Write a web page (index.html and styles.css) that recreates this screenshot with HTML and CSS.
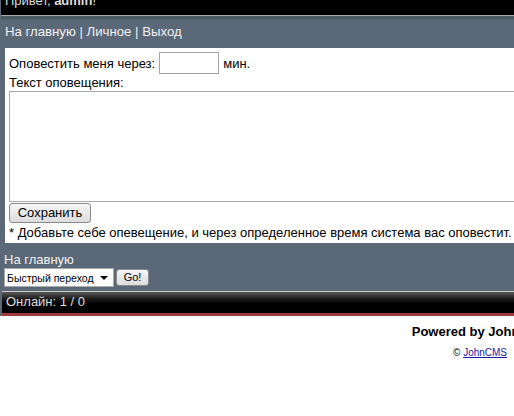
FILE: index.html
```html
<!DOCTYPE html>
<html>
<head>
<meta charset="utf-8">
<link rel="stylesheet" href="styles.css">
</head>
<body>
<div class="page">
  <div class="hello"><span class="hello-text">Привет, <b>admin</b>!</span></div>
  <div class="nav">На главную | Личное | Выход</div>
  <div class="content">
    <div class="row">Оповестить меня через: <span class="field"></span> мин.</div>
    <div class="label">Текст оповещения:</div>
    <div class="textarea"></div>
    <div class="btn-row"><span class="btn save">Сохранить</span></div>
    <div class="note">* Добавьте себе опевещение, и через определенное время система вас оповестит.</div>
  </div>
  <div class="foot-nav">
    <div class="home">На главную</div>
    <div class="jump">
      <span class="select">Быстрый переход<span class="arrow"></span></span>
      <span class="btn go">Go!</span>
    </div>
  </div>
  <div class="online">Онлайн: 1 / 0</div>
</div>
<div class="powered">
  <div class="pw">Powered by JohnCMS</div>
  <div class="copy">© <a href="#">JohnCMS</a></div>
</div>
</body>
</html>
```
FILE: styles.css
```css
html, body {
  margin: 0;
  padding: 0;
  overflow: hidden;
  background: #fff;
}
body {
  width: 960px;
  font-family: "Liberation Sans", Arial, sans-serif;
  font-size: 13px;
  color: #000;
}
.page {
  background: #5a6878;
  padding-left: 1px;
}
.hello {
  background: #000;
  height: 15px;
  overflow: hidden;
  color: #ddd;
  border-bottom: 1px solid #a8a8a8;
}
.hello-text {
  display: block;
  margin-top: -7px;
  padding-left: 4px;
  line-height: 16px;
}
.nav {
  height: 32px;
  line-height: 32px;
  padding-left: 4px;
  color: #f2f2f2;
  font-size: 13.2px;
  background: linear-gradient(#4d5a66 0, #4d5a66 3px, #5a6878 4px);
}
.content {
  margin-left: 4px;
  background: #fff;
  padding: 4px 0 4px 4px;
  height: 187px;
}
.row {
  display: flex;
  align-items: center;
  height: 22px;
}
.field {
  display: inline-block;
  border: 1px solid #a5a5a5;
  margin: 0 4px 0 4px;
  box-sizing: border-box;
  width: 60px;
  height: 22px;
}
.label {
  margin-top: 1px;
  line-height: 15px;
}
.textarea {
  margin-top: 1px;
  height: 109px;
  border: 1px solid #aaa;
  border-right: none;
}
.btn-row {
  margin-top: 1px;
  height: 20px;
}
.btn {
  display: inline-block;
  box-sizing: border-box;
  border: 1px solid #8a8a8a;
  border-radius: 3px;
  background: linear-gradient(#f6f6f6, #dcdcdc);
  text-align: center;
}
.save {
  width: 82px;
  height: 20px;
  line-height: 18px;
  font-size: 13px;
}
.note {
  margin-top: 1px;
  line-height: 17px;
}
.foot-nav {
  padding: 8px 0 4px 3px;
  color: #f2f2f2;
}
.home {
  line-height: 17px;
  font-size: 13px;
}
.jump {
  display: flex;
  align-items: center;
  gap: 2px;
  margin-top: 0;
}
.select {
  display: inline-flex;
  align-items: center;
  box-sizing: border-box;
  width: 110px;
  height: 19px;
  background: #fff;
  color: #000;
  font-size: 10.5px;
  padding-left: 2px;
  border: 1px solid #aaa;
  position: relative;
}
.arrow {
  position: absolute;
  right: 5px;
  top: 7px;
  width: 0;
  height: 0;
  border-left: 4px solid transparent;
  border-right: 4px solid transparent;
  border-top: 4px solid #000;
}
.go {
  width: 33px;
  height: 17px;
  line-height: 15px;
  font-size: 11px;
  color: #000;
}
.online {
  border-top: 1px solid #c8c8c8;
  height: 21px;
  line-height: 20px;
  padding-left: 4px;
  color: #ddd;
  font-size: 13px;
  background: linear-gradient(#5a5a5a 0, #1a1a1a 7px, #000 12px);
  border-bottom: 3px solid #a03a3a;
  margin-left: 1px;
}
.powered {
  text-align: center;
  padding-top: 8px;
}
.pw {
  font-weight: bold;
  font-size: 13px;
  line-height: 16px;
}
.copy {
  margin-top: 7px;
  font-size: 10px;
  line-height: 12px;
}
.copy a {
  color: #1a1aa8;
}
```
